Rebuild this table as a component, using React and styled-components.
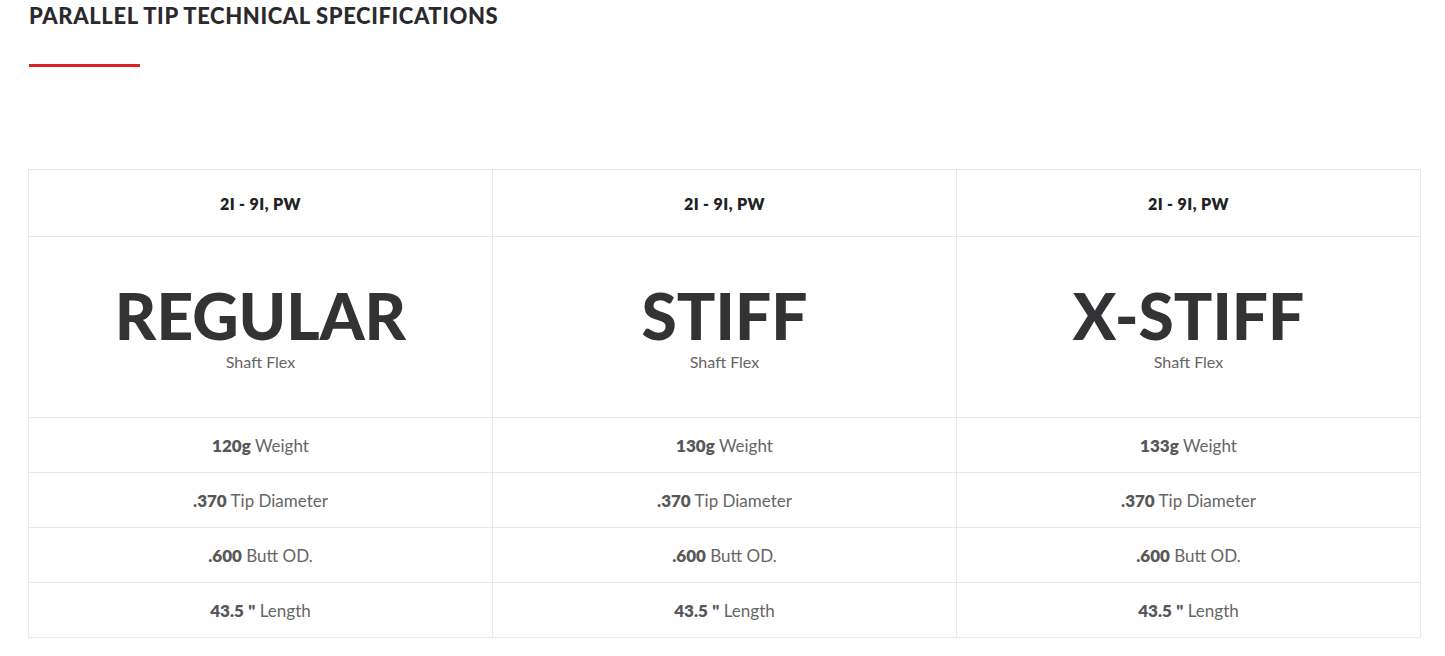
import React from 'react';
import styled, { createGlobalStyle } from 'styled-components';

const GlobalStyle = createGlobalStyle`
    body {
        margin: 0;
        background: #fff;
        font-family: Lato, "Liberation Sans", sans-serif;
    }
`;

const Page = styled.div`
    padding: 3px 24px 0 28px;
`;

const Title = styled.h2`
    margin: 0 0 0 1px;
    font-size: 22px;
    font-weight: 900;
    color: #2a2a2e;
    letter-spacing: 0.6px;
    line-height: 26px;
`;

const RedRule = styled.div`
    width: 111px;
    height: 3px;
    background: #d8232a;
    margin: 35px 0 0 1px;
`;

const Table = styled.div`
    margin-top: 102px;
    display: grid;
    grid-template-columns: repeat(3, 1fr);
    border-top: 1px solid #e8e8e8;
    border-left: 1px solid #e8e8e8;
`;

const Column = styled.div`
    display: grid;
    grid-template-rows: 67px 181px 55px 55px 55px 55px;
`;

const Cell = styled.div`
    border-right: 1px solid #e8e8e8;
    border-bottom: 1px solid #e8e8e8;
    display: flex;
    flex-direction: column;
    align-items: center;
    justify-content: center;
    padding-bottom: ${(p) => p.$lift || 0}px;
`;

const Clubs = styled.span`
    font-size: 16px;
    font-weight: 800;
    color: #222;
    letter-spacing: 0.4px;
`;

const Flex = styled.span`
    font-size: 64px;
    font-weight: 900;
    color: #333336;
    line-height: 1.2;
`;

const FlexLabel = styled.span`
    font-size: 16px;
    line-height: 16px;
    color: #666;
`;

const Spec = styled.span`
    font-size: 17px;
    color: #666;
    b {
        font-weight: 800;
        color: #585858;
    }
`;

const shafts = [
    { flex: 'REGULAR', weight: '120g' },
    { flex: 'STIFF', weight: '130g' },
    { flex: 'X-STIFF', weight: '133g' },
];

export default function App() {
    return (
        <Page>
            <GlobalStyle />
            <Title>PARALLEL TIP TECHNICAL SPECIFICATIONS</Title>
            <RedRule />
            <Table>
                {shafts.map((s) => (
                    <Column key={s.flex}>
                        <Cell><Clubs>2I - 9I, PW</Clubs></Cell>
                        <Cell $lift={6}>
                            <Flex>{s.flex}</Flex>
                            <FlexLabel>Shaft Flex</FlexLabel>
                        </Cell>
                        <Cell><Spec><b>{s.weight}</b> Weight</Spec></Cell>
                        <Cell><Spec><b>.370</b> Tip Diameter</Spec></Cell>
                        <Cell><Spec><b>.600</b> Butt OD.</Spec></Cell>
                        <Cell><Spec><b>43.5</b> <b>"</b> Length</Spec></Cell>
                    </Column>
                ))}
            </Table>
        </Page>
    );
}
